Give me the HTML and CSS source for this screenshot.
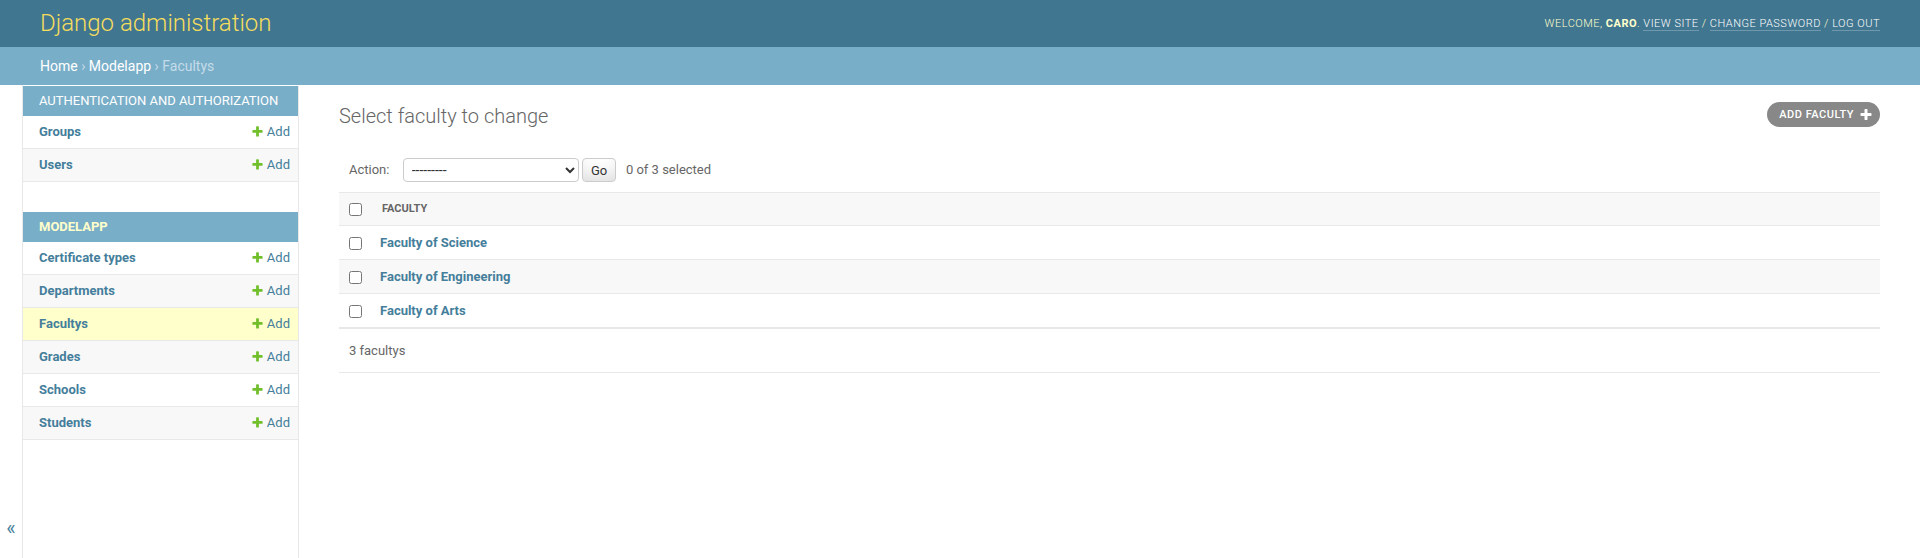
FILE: index.html
```html
<!DOCTYPE html>
<html lang="en">
<head>
<meta charset="utf-8">
<title>Select faculty to change | Django site admin</title>
<link rel="stylesheet" href="styles.css">
</head>
<body>
<div class="container">
  <header class="header">
    <div class="branding"><h1 class="site-name"><a href="#">Django administration</a></h1></div>
    <div class="user-tools">Welcome, <strong>caro</strong>. <a href="#">View site</a> / <a href="#">Change password</a> / <a href="#">Log out</a></div>
  </header>
  <nav class="breadcrumbs"><a href="#">Home</a> &rsaquo; <a href="#">Modelapp</a> &rsaquo; Facultys</nav>
  <div class="main">
    <button class="toggle-nav" type="button" aria-label="Toggle navigation">&laquo;</button>
    <nav class="nav-sidebar">
      <div class="module">
        <table class="app-table">
          <caption><a class="section" href="#">Authentication and Authorization</a></caption>
          <tbody>
            <tr><th scope="row"><a href="#">Groups</a></th><td><a class="addlink" href="#"><svg class="plus" width="13" height="13" viewBox="0 0 1792 1792"><path fill="#70bf2b" d="M1600 796v192q0 40-28 68t-68 28h-416v416q0 40-28 68t-68 28h-192q-40 0-68-28t-28-68v-416h-416q-40 0-68-28t-28-68v-192q0-40 28-68t68-28h416v-416q0-40 28-68t68-28h192q40 0 68 28t28 68v416h416q40 0 68 28t28 68z"/></svg>Add</a></td></tr>
            <tr><th scope="row"><a href="#">Users</a></th><td><a class="addlink" href="#"><svg class="plus" width="13" height="13" viewBox="0 0 1792 1792"><path fill="#70bf2b" d="M1600 796v192q0 40-28 68t-68 28h-416v416q0 40-28 68t-68 28h-192q-40 0-68-28t-28-68v-416h-416q-40 0-68-28t-28-68v-192q0-40 28-68t68-28h416v-416q0-40 28-68t68-28h192q40 0 68 28t28 68v416h416q40 0 68 28t28 68z"/></svg>Add</a></td></tr>
          </tbody>
        </table>
      </div>
      <div class="module current-app">
        <table class="app-table">
          <caption><a class="section" href="#">Modelapp</a></caption>
          <tbody>
            <tr><th scope="row"><a href="#">Certificate types</a></th><td><a class="addlink" href="#"><svg class="plus" width="13" height="13" viewBox="0 0 1792 1792"><path fill="#70bf2b" d="M1600 796v192q0 40-28 68t-68 28h-416v416q0 40-28 68t-68 28h-192q-40 0-68-28t-28-68v-416h-416q-40 0-68-28t-28-68v-192q0-40 28-68t68-28h416v-416q0-40 28-68t68-28h192q40 0 68 28t28 68v416h416q40 0 68 28t28 68z"/></svg>Add</a></td></tr>
            <tr><th scope="row"><a href="#">Departments</a></th><td><a class="addlink" href="#"><svg class="plus" width="13" height="13" viewBox="0 0 1792 1792"><path fill="#70bf2b" d="M1600 796v192q0 40-28 68t-68 28h-416v416q0 40-28 68t-68 28h-192q-40 0-68-28t-28-68v-416h-416q-40 0-68-28t-28-68v-192q0-40 28-68t68-28h416v-416q0-40 28-68t68-28h192q40 0 68 28t28 68v416h416q40 0 68 28t28 68z"/></svg>Add</a></td></tr>
            <tr class="current-model"><th scope="row"><a href="#">Facultys</a></th><td><a class="addlink" href="#"><svg class="plus" width="13" height="13" viewBox="0 0 1792 1792"><path fill="#70bf2b" d="M1600 796v192q0 40-28 68t-68 28h-416v416q0 40-28 68t-68 28h-192q-40 0-68-28t-28-68v-416h-416q-40 0-68-28t-28-68v-192q0-40 28-68t68-28h416v-416q0-40 28-68t68-28h192q40 0 68 28t28 68v416h416q40 0 68 28t28 68z"/></svg>Add</a></td></tr>
            <tr><th scope="row"><a href="#">Grades</a></th><td><a class="addlink" href="#"><svg class="plus" width="13" height="13" viewBox="0 0 1792 1792"><path fill="#70bf2b" d="M1600 796v192q0 40-28 68t-68 28h-416v416q0 40-28 68t-68 28h-192q-40 0-68-28t-28-68v-416h-416q-40 0-68-28t-28-68v-192q0-40 28-68t68-28h416v-416q0-40 28-68t68-28h192q40 0 68 28t28 68v416h416q40 0 68 28t28 68z"/></svg>Add</a></td></tr>
            <tr><th scope="row"><a href="#">Schools</a></th><td><a class="addlink" href="#"><svg class="plus" width="13" height="13" viewBox="0 0 1792 1792"><path fill="#70bf2b" d="M1600 796v192q0 40-28 68t-68 28h-416v416q0 40-28 68t-68 28h-192q-40 0-68-28t-28-68v-416h-416q-40 0-68-28t-28-68v-192q0-40 28-68t68-28h416v-416q0-40 28-68t68-28h192q40 0 68 28t28 68v416h416q40 0 68 28t28 68z"/></svg>Add</a></td></tr>
            <tr><th scope="row"><a href="#">Students</a></th><td><a class="addlink" href="#"><svg class="plus" width="13" height="13" viewBox="0 0 1792 1792"><path fill="#70bf2b" d="M1600 796v192q0 40-28 68t-68 28h-416v416q0 40-28 68t-68 28h-192q-40 0-68-28t-28-68v-416h-416q-40 0-68-28t-28-68v-192q0-40 28-68t68-28h416v-416q0-40 28-68t68-28h192q40 0 68 28t28 68v416h416q40 0 68 28t28 68z"/></svg>Add</a></td></tr>
          </tbody>
        </table>
      </div>
    </nav>
    <main class="content">
      <div class="content-head">
        <h1>Select faculty to change</h1>
        <a class="object-add" href="#">Add faculty<svg class="tooltag" width="14" height="14" viewBox="0 0 1792 1792"><path fill="#fff" d="M1600 736v192q0 40-28 68t-68 28h-416v416q0 40-28 68t-68 28h-192q-40 0-68-28t-28-68v-416h-416q-40 0-68-28t-28-68v-192q0-40 28-68t68-28h416v-416q0-40 28-68t68-28h192q40 0 68 28t28 68v416h416q40 0 68 28t28 68z"/></svg></a>
      </div>
      <div class="changelist">
        <form class="changelist-form">
          <div class="actions">
            <label>Action: <select name="action">
              <option value="" selected>---------</option>
              <option value="delete_selected">Delete selected facultys</option>
            </select></label>
            <button class="go" type="button">Go</button>
            <span class="action-counter">0 of 3 selected</span>
          </div>
          <table class="result-list">
            <thead>
              <tr>
                <th class="action-checkbox-column"><input type="checkbox" aria-label="Select all objects on this page"></th>
                <th class="col-head">Faculty</th>
              </tr>
            </thead>
            <tbody>
              <tr><td class="action-checkbox"><input type="checkbox"></td><th class="field-name"><a href="#">Faculty of Science</a></th></tr>
              <tr><td class="action-checkbox"><input type="checkbox"></td><th class="field-name"><a href="#">Faculty of Engineering</a></th></tr>
              <tr><td class="action-checkbox"><input type="checkbox"></td><th class="field-name"><a href="#">Faculty of Arts</a></th></tr>
            </tbody>
          </table>
        </form>
        <p class="paginator">3 facultys</p>
      </div>
    </main>
  </div>
</div>
</body>
</html>
```

FILE: styles.css
```css
html, body {
  margin: 0;
  padding: 0;
  height: 100%;
}

body {
  font-family: Roboto, "Liberation Sans", Arial, sans-serif;
  font-size: 14px;
  color: #333;
  background: #fff;
}

a {
  color: #447e9b;
  text-decoration: none;
}

.container {
  display: flex;
  flex-direction: column;
  height: 100vh;
  overflow: hidden;
}

/* Header */
.header {
  display: flex;
  justify-content: space-between;
  align-items: center;
  padding: 10px 40px;
  background: #417690;
  color: #ffc;
  flex: 0 0 auto;
}

.site-name {
  margin: 0 20px 0 0;
  font-weight: 300;
  font-size: 24px;
  line-height: 27px;
}

.site-name a {
  color: #f5dd5d;
}

.user-tools {
  font-weight: 300;
  font-size: 11px;
  letter-spacing: 0.5px;
  text-transform: uppercase;
  text-align: right;
}

.user-tools strong {
  font-weight: 700;
}

.user-tools a {
  color: #fff;
  border-bottom: 1px solid rgba(255, 255, 255, 0.25);
}

.breadcrumbs {
  background: #79aec8;
  padding: 10px 40px;
  line-height: 18px;
  color: #c4dce8;
  flex: 0 0 auto;
}

.breadcrumbs a {
  color: #fff;
}

/* Main layout */
.main {
  display: flex;
  flex: 1 0 auto;
  min-height: 886px;
}

.toggle-nav {
  flex: 0 0 23px;
  width: 23px;
  display: flex;
  align-items: center;
  justify-content: center;
  border: 0;
  border-right: 1px solid #e8e8e8;
  background: #fff;
  font-family: inherit;
  font-size: 20px;
  color: #447e9b;
  padding: 0;
  cursor: pointer;
}

.nav-sidebar {
  flex: 0 0 275px;
  border-top: 1px solid transparent;
  border-right: 1px solid #e8e8e8;
  background: #fff;
}

.module {
  margin-bottom: 30px;
}

.app-table {
  width: 100%;
  border-collapse: collapse;
}

.app-table caption {
  margin: 0;
  padding: 8px 8px 8px 16px;
  font-weight: 400;
  font-size: 13px;
  line-height: 14px;
  text-align: left;
  text-transform: uppercase;
  background: #79aec8;
  color: #fff;
}

.app-table caption a {
  color: #fff;
}

.current-app caption a {
  color: #ffc;
  font-weight: 700;
}

.app-table th,
.app-table td {
  font-size: 13px;
  line-height: 16px;
  border-bottom: 1px solid #e8e8e8;
  vertical-align: top;
  padding: 8px;
}

.app-table th {
  width: 100%;
  padding-left: 16px;
  text-align: left;
  font-weight: 700;
}

.app-table td {
  white-space: nowrap;
}

.app-table tr:nth-child(odd) {
  background: #fff;
}

.app-table tr:nth-child(even) {
  background: #f8f8f8;
}

.app-table tr.current-model {
  background: #ffc;
}

.addlink .plus {
  vertical-align: -2px;
  margin-right: 3px;
}

/* Content */
.content {
  flex: 1 1 auto;
  min-width: 0;
  padding: 20px 40px;
}

.content-head {
  display: flex;
  justify-content: space-between;
  align-items: flex-start;
  margin-bottom: 20px;
}

.content-head h1 {
  margin: 0;
  font-weight: 300;
  font-size: 20px;
  line-height: 23px;
  color: #666;
}

.object-add {
  display: flex;
  align-items: center;
  margin-top: -3px;
  padding: 3px 7px 3px 12px;
  background: #888;
  color: #fff;
  font-size: 11px;
  line-height: 19px;
  font-weight: 500;
  text-transform: uppercase;
  letter-spacing: 0.5px;
  border-radius: 15px;
}

.object-add .tooltag {
  margin-left: 5px;
}

.actions {
  padding: 10px;
  line-height: 24px;
  font-size: 13px;
  color: #666;
}

.actions select {
  vertical-align: top;
  height: 24px;
  width: 176px;
  color: #333;
  background: #fff;
  border: 1px solid #ccc;
  border-radius: 4px;
  font-family: inherit;
  font-size: 14px;
  padding: 0 0 0 4px;
  margin: 0 0 0 10px;
}

.actions .go {
  vertical-align: top;
  font-family: inherit;
  font-size: 13px;
  border: 1px solid #ccc;
  border-radius: 4px;
  background: #fff;
  box-shadow: 0 -15px 20px -10px rgba(0, 0, 0, 0.15) inset;
  height: 24px;
  line-height: 1;
  padding: 4px 8px;
  margin: 0;
  color: #333;
  cursor: pointer;
}

.action-counter {
  margin: 0 0.5em;
}

.result-list {
  width: 100%;
  border-collapse: collapse;
}

.result-list thead th {
  background: #f8f8f8;
  border-top: 1px solid #e8e8e8;
  border-bottom: 1px solid #e8e8e8;
  color: #666;
  font-size: 11px;
  font-weight: 700;
  line-height: 16px;
  text-transform: uppercase;
  text-align: left;
  white-space: nowrap;
  vertical-align: middle;
  padding: 8px 10px;
}

.result-list .action-checkbox-column,
.result-list .action-checkbox {
  width: 13px;
  padding: 8px 10px;
  text-align: center;
}

.result-list input[type="checkbox"] {
  margin: 0;
  vertical-align: middle;
}

.result-list tbody td,
.result-list tbody th {
  font-size: 13px;
  line-height: 17px;
  border-bottom: 1px solid #e8e8e8;
  vertical-align: middle;
}

.result-list tbody th {
  padding: 8px;
  text-align: left;
  font-weight: 700;
}

.result-list tbody tr:nth-child(odd) {
  background: #fff;
}

.result-list tbody tr:nth-child(even) {
  background: #f8f8f8;
}

.paginator {
  margin: 0;
  padding: 11px 10px 10px;
  font-size: 13px;
  line-height: 22px;
  color: #666;
  border-top: 1px solid #e8e8e8;
  border-bottom: 1px solid #e8e8e8;
}
```
